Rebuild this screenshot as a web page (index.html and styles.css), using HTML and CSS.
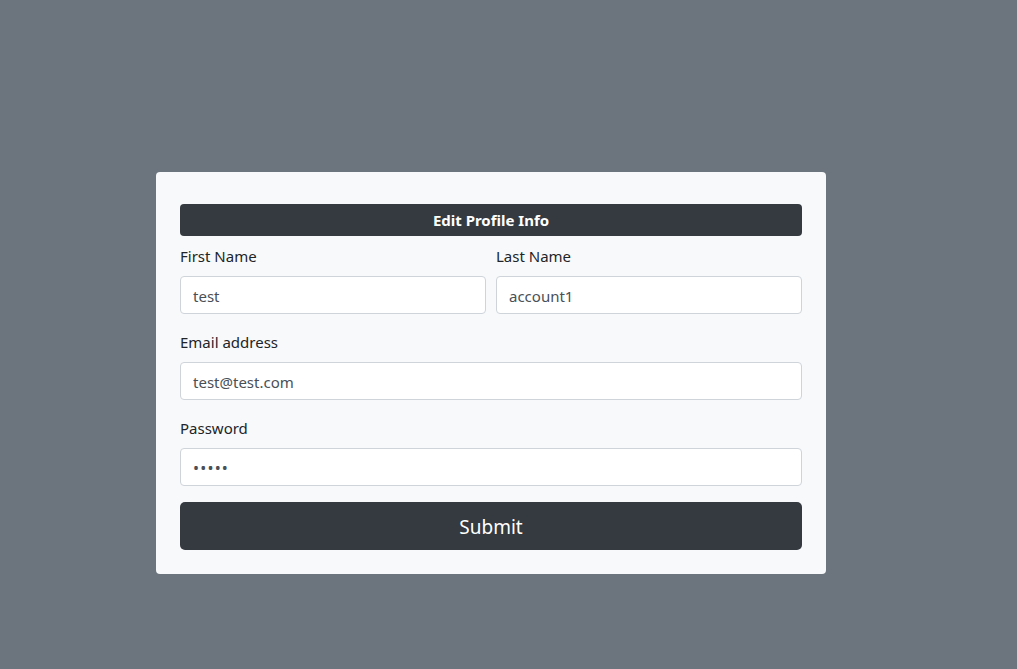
FILE: index.html
```html
<!DOCTYPE html>
<html>
<head>
<meta charset="utf-8">
<link rel="stylesheet" href="styles.css">
</head>
<body>
<div class="page">
  <form class="card">
    <div class="card-title">Edit Profile Info</div>
    <div class="row">
      <div class="group">
        <label class="label">First Name</label>
        <input class="input" type="text" value="test">
      </div>
      <div class="group">
        <label class="label">Last Name</label>
        <input class="input" type="text" value="account1">
      </div>
    </div>
    <div class="group">
      <label class="label">Email address</label>
      <input class="input" type="email" value="test@test.com">
    </div>
    <div class="group">
      <label class="label">Password</label>
      <input class="input input-password" type="password" value="abcde">
    </div>
    <button class="submit" type="button">Submit</button>
  </form>
</div>
</body>
</html>
```
FILE: styles.css
```css
html, body {
  margin: 0;
  padding: 0;
  height: 100%;
}
body {
  background: #6c757d;
  font-family: "Noto Sans", "Open Sans", sans-serif;
  font-size: 15px;
  color: #212529;
}
.page {
  display: flex;
  padding: 172px 0 0 156px;
}
.card {
  width: 670px;
  box-sizing: border-box;
  background: #f8f9fa;
  border-radius: 4px;
  padding: 32px 24px 24px 24px;
  display: flex;
  flex-direction: column;
}
.card-title {
  background: #343a40;
  color: #fff;
  font-weight: 700;
  text-align: center;
  height: 32px;
  line-height: 32px;
  border-radius: 4px;
  margin-bottom: 8px;
}
.row {
  display: flex;
  gap: 10px;
}
.row .group {
  flex: 1;
}
.group {
  display: flex;
  flex-direction: column;
  margin-bottom: 16px;
}
.label {
  line-height: 24px;
  margin-bottom: 8px;
}
.input {
  height: 38px;
  box-sizing: border-box;
  border: 1px solid #ced4da;
  border-radius: 4px;
  background: #fff;
  padding: 2px 12px 0 12px;
  font-family: inherit;
  font-size: 15px;
  color: #495057;
  outline: none;
}
.input-password {
  letter-spacing: 1.2px;
  font-size: 16px;
}
.submit {
  height: 48px;
  border: none;
  border-radius: 5px;
  background: #343a40;
  color: #fff;
  font-family: inherit;
  font-size: 19px;
  padding: 2px 0 0 0;
}
```
